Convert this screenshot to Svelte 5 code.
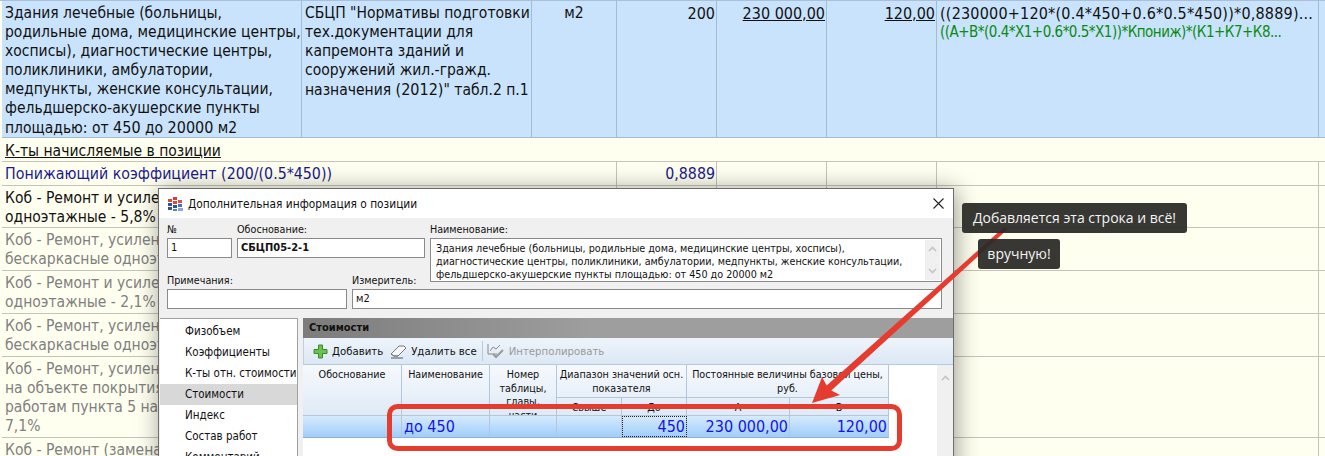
<script>
  const yellowRows = [
    { h: 42, cls: 'dark', lines: ['Коб - Ремонт и усиление конструкций', 'одноэтажные - 5,8%'] },
    { h: 43, cls: 'grey', lines: ['Коб - Ремонт, усиление конструкций', 'бескаркасные одноэтажные'] },
    { h: 43, cls: 'grey', lines: ['Коб - Ремонт и усиление конструкций', 'одноэтажные - 2,1%'] },
    { h: 43, cls: 'grey', lines: ['Коб - Ремонт, усиление конструкций', 'бескаркасные одноэтажные'] },
    { h: 81, cls: 'grey', lines: ['Коб - Ремонт, усиление конструкций', 'на объекте покрытия', 'работам пункта 5 настоящего', '7,1%'] },
    { h: 43, cls: 'grey', lines: ['Коб - Ремонт (замена конструкций)'] }
  ];
  const nav = ['Физобъем', 'Коэффициенты', 'К-ты отн. стоимости', 'Стоимости', 'Индекс', 'Состав работ', 'Комментарий'];
</script>

<div class="page">
  <div class="sheet">
    <div class="row blue">
      <div class="cell c1 lines">Здания лечебные (больницы,<br>родильные дома, медицинские центры,<br>хосписы), диагностические центры,<br>поликлиники, амбулатории,<br>медпункты, женские консультации,<br>фельдшерско-акушерские пункты<br>площадью: от <span class="num">450</span> до <span class="num">20000</span> м2</div>
      <div class="cell c2 lines">СБЦП "Нормативы подготовки<br>тех.документации для<br>капремонта зданий и<br>сооружений жил.-гражд.<br>назначения <span class="num">(2012)</span>" табл.2 п.1</div>
      <div class="cell c3 txt">м2</div>
      <div class="cell c4">200</div>
      <div class="cell c5"><u>230 000,00</u></div>
      <div class="cell c6"><u>120,00</u></div>
      <div class="cell c7">
        <div class="formula">((230000+120*(0.4*450+0.6*0.5*450))*0,8889)...</div>
        <div class="green">((А+В*(0.4*Х1+0.6*0.5*Х1))*Кпониж)*(К1+К7+К8...</div>
      </div>
      <div class="cell c8"></div>
    </div>
    <div class="row section txt"><u>К-ты начисляемые в позиции</u></div>
    <div class="row yellow h24">
      <div class="cell c13 navy">Понижающий коэффициент (200/(0.5*450))</div>
      <div class="cell c4 navy">0,8889</div>
      <div class="cell c5"></div>
      <div class="cell c6"></div>
      <div class="cell c7"></div>
      <div class="cell c8"></div>
    </div>
    {#each yellowRows as r}
      <div class="row yellow" style="height:{r.h}px">
        <div class="cell c13 {r.cls}">{#each r.lines as l}<div>{l}</div>{/each}</div>
        <div class="cell c4"></div>
        <div class="cell c5"></div>
        <div class="cell c6"></div>
        <div class="cell c7"></div>
        <div class="cell c8"></div>
      </div>
    {/each}
  </div>

  <div class="dialog">
    <div class="titlebar">
      <svg class="appicon" width="17" height="16" viewBox="0 0 17 16">
        <rect x="1" y="3" width="4" height="3" fill="#e0483c"/>
        <rect x="6" y="1" width="4" height="3" fill="#d83c32"/>
        <rect x="6" y="5" width="4" height="3" fill="#e0483c"/>
        <rect x="11" y="4" width="4" height="3" fill="#d85048"/>
        <rect x="1" y="7" width="4" height="3" fill="#30509c"/>
        <rect x="6" y="9" width="4" height="3" fill="#30509c"/>
        <rect x="11" y="8" width="4" height="3" fill="#4a70b8"/>
        <rect x="1" y="11" width="4" height="3" fill="#30509c"/>
        <rect x="6" y="13" width="4" height="2" fill="#5a80c4"/>
        <rect x="11" y="12" width="5" height="3" fill="#88a8d8"/>
      </svg>
      <span class="title">Дополнительная информация о позиции</span>
      <svg class="close" width="11" height="11" viewBox="0 0 11 11"><path d="M.5.5l10 10M10.500.5l-10 10" stroke="#222" stroke-width="1.100" fill="none"/></svg>
    </div>

    <div class="form">
      <label class="lbl l-num">№</label>
      <div class="input i-num">1</div>
      <label class="lbl l-base">Обоснование:</label>
      <div class="input i-base bold">СБЦП05-2-1</div>
      <label class="lbl l-name">Наименование:</label>
      <div class="input memo">
        <div class="memotext">Здания лечебные (больницы, родильные дома, медицинские центры, хосписы),<br>диагностические центры, поликлиники, амбулатории, медпункты, женские консультации,<br>фельдшерско-акушерские пункты площадью: от 450 до 20000 м2</div>
        <div class="memoscroll">
          <svg width="9" height="6" viewBox="0 0 9 6"><path d="M1 5l3.500-3.500L8 5" stroke="#c4c4c4" stroke-width="1.600" fill="none"/></svg>
          <svg width="9" height="6" viewBox="0 0 9 6"><path d="M1 1l3.500 3.500L8 1" stroke="#c4c4c4" stroke-width="1.600" fill="none"/></svg>
        </div>
      </div>
      <label class="lbl l-note">Примечания:</label>
      <div class="input i-note"></div>
      <label class="lbl l-unit">Измеритель:</label>
      <div class="input i-unit">м2</div>
    </div>

    <div class="main">
      <div class="nav">
        {#each nav as item}
          <div class="navitem" class:sel={item === 'Стоимости'}>{item}</div>
        {/each}
      </div>
      <div class="pane">
        <div class="panehead">Стоимости</div>
        <div class="toolbar">
          <svg class="ti" width="15" height="15" viewBox="0 0 15 15"><path d="M5.500 1h4v4.500h4.500v4h-4.500v4.500h-4v-4.500h-4.500v-4h4.500z" fill="#6cc24a" stroke="#3d8a2a"/></svg>
          <span class="tt">Добавить</span>
          <svg class="ti er" width="17" height="15" viewBox="0 0 17 15"><path d="M1 10l8-8h5l2 2-8 8H4z" fill="#f4f6f8" stroke="#777"/><path d="M1 10l3 2h4" fill="none" stroke="#777"/><path d="M1 14h12" stroke="#555"/></svg>
          <span class="tt">Удалить все</span>
          <span class="tsep"></span>
          <svg class="ti" width="18" height="17" viewBox="0 0 18 17"><path d="M1 1v10h9M3 8l3-4 3 2 4-4" fill="none" stroke="#8a8a8a"/><path d="M6 11l3 3 7-7" fill="none" stroke="#9a9a9a" stroke-width="2"/></svg>
          <span class="tt off">Интерполировать</span>
        </div>
        <div class="tablearea">
          <div class="table">
            <div class="thead">
              <div class="th a1">Обоснование</div>
              <div class="th a2">Наименование</div>
              <div class="th a3">Номер таблицы, главы, части</div>
              <div class="th a4">Диапазон значений осн. показателя</div>
              <div class="th a5">Постоянные величины базовой цены, руб.</div>
              <div class="th sub s1">Свыше</div>
              <div class="th sub s2">До</div>
              <div class="th sub s3">А</div>
              <div class="th sub s4">В</div>
            </div>
            <div class="tbody">
              <div class="td"></div>
              <div class="td left">до 450</div>
              <div class="td"></div>
              <div class="td"></div>
              <div class="td focus">450</div>
              <div class="td">230 000,00</div>
              <div class="td">120,00</div>
            </div>
          </div>
          <div class="vscroll">
            <svg width="9" height="6" viewBox="0 0 9 6"><path d="M1 5l3.500-3.500L8 5" stroke="#c4c4c4" stroke-width="1.600" fill="none"/></svg>
          </div>
        </div>
      </div>
    </div>
  </div>

  <svg class="overlay" width="1325" height="456" viewBox="0 0 1325 456">
    <path d="M1007.300 229.500 831.300 390.600 840 395 812 403 822 377 826.700 385.400 1004.700 226.500z" fill="#e53c30"/>
    <rect x="389.500" y="406.500" width="510" height="42" rx="8" fill="none" stroke="#e53c30" stroke-width="5"/>
  </svg>

  <div class="tip t1">Добавляется эта строка и всё!</div>
  <div class="tip t2">вручную!</div>
</div>

<style>
  :global(body) { margin: 0; background: #fffff0; }
  .page {
    position: relative;
    width: 1325px;
    height: 456px;
    overflow: hidden;
    font-family: "DejaVu Sans", sans-serif;
    font-stretch: condensed;
    color: #111;
  }
  .sheet { display: flex; flex-direction: column; padding-left: 2px; border-top: 1px solid #a9c0d8; }
  .row { display: flex; box-sizing: border-box; font-size: 16px; line-height: 19px; flex: none; }
  .txt { font-size: 15.500px; }
  .lines { font-size: 15.500px; white-space: nowrap; }
  .num { font-size: 16px; }
  .blue { height: 137px; background: #c9e3fc; border-bottom: 1px solid #a3bcd6; }
  .section { height: 24px; background: #fffff0; border-bottom: 1px solid #c4c4bc; padding: 4px 3px 0; }
  .yellow { background: #fffff0; border-bottom: 1px solid #c4c4bc; }
  .h24 { height: 24px; }
  .h24 .cell { padding-top: 2px; }
  .cell { box-sizing: border-box; padding: 3px 3px 0; border-right: 1px solid #a3bcd6; overflow: hidden; flex: none; }
  .yellow .cell { border-right-color: #c4c4bc; }
  .c1 { width: 300px; }
  .c2 { width: 230px; }
  .c3 { width: 85px; text-align: center; }
  .c4 { width: 100px; text-align: right; padding-right: 1px; }
  .c5 { width: 110px; text-align: right; padding-right: 1px; }
  .c6 { width: 110px; text-align: right; padding-right: 1px; }
  .c7 { width: 382px; white-space: nowrap; }
  .c8 { width: 6px; border-right: 0; }
  .c13 { width: 615px; white-space: nowrap; font-size: 15.500px; }
  .formula { letter-spacing: .2px; }
  .green { color: #0a8a10; font-size: 15px; letter-spacing: -.5px; }
  .navy { color: #1a1a8c; font-size: 15.800px; }
  .dark { color: #111; }
  .grey { color: #808080; }

  .dialog {
    position: absolute;
    left: 158px;
    top: 188px;
    width: 796px;
    height: 290px;
    box-sizing: border-box;
    border: 1px solid #6e6e6e;
    background: #f0f0f0;
    box-shadow: 2px 2px 22px rgba(0, 0, 0, .4);
    font-size: 10.700px;
    color: #111;
    display: flex;
    flex-direction: column;
  }
  .titlebar { height: 29px; flex: none; background: #fff; display: flex; align-items: center; padding: 0 9px 0 8px; gap: 4px; }
  .title { font-size: 11.800px; flex: 1; }
  .close { flex: none; margin-right: 0; }

  .form {
    display: grid;
    grid-template-columns: 65px 110px 73px 512px;
    grid-template-rows: 16px 20px 15px 16px 20px;
    column-gap: 5px;
    padding: 4px 0 9px 8px;
    flex: none;
  }
  .lbl { line-height: 15px; }
  .input {
    box-sizing: border-box;
    background: #fff;
    border: 1px solid #8a8a8a;
    padding: 0 3px;
    line-height: 18px;
    font-size: 11px;
    overflow: hidden;
  }
  .bold { font-weight: 700; }
  .l-num { grid-area: 1 / 1; }
  .i-num { grid-area: 2 / 1; }
  .l-base { grid-area: 1 / 2 / auto / span 2; }
  .i-base { grid-area: 2 / 2 / auto / span 2; }
  .l-name { grid-area: 1 / 4; }
  .memo { grid-area: 2 / 4 / span 3 / auto; height: 44px; display: flex; padding: 0; }
  .memotext { flex: 1; padding: 3px 5px; font-size: 10.700px; line-height: 13px; white-space: nowrap; }
  .memoscroll { width: 15px; margin: 1px; flex: none; background: #f0f0f0; display: flex; flex-direction: column; justify-content: space-between; align-items: center; padding: 6px 0; box-sizing: border-box; }
  .l-note { grid-area: 4 / 1 / auto / span 2; }
  .i-note { grid-area: 5 / 1 / auto / span 2; }
  .l-unit { grid-area: 4 / 3; }
  .i-unit { grid-area: 5 / 3 / auto / span 2; }

  .main { display: flex; flex: 1; min-height: 0; padding-left: 1px; gap: 5px; }
  .nav { width: 138px; flex: none; box-sizing: border-box; background: #fff; border: 1px solid #a0a0a0; border-left: 0; padding-top: 2px; }
  .navitem { height: 21px; line-height: 21px; padding-left: 25px; white-space: nowrap; font-size: 11.500px; }
  .navitem.sel { background: #d8d8d8; }
  .pane { flex: 1; display: flex; flex-direction: column; min-width: 0; }
  .panehead {
    height: 20px; flex: none; box-sizing: border-box; padding-left: 6px;
    line-height: 20px; font-weight: 700; font-size: 11px; color: #111;
    background: linear-gradient(90deg, #7c7c7c, #9e9e9e 45%, #9e9e9e);
  }
  .toolbar {
    height: 27px; flex: none; box-sizing: border-box; display: flex; align-items: center; padding-left: 9px;
    background: linear-gradient(#eef4fb, #dce8f5);
    border-bottom: 1px solid #b6cadf;
    border-left: 1px solid #c0d0e0;
  }
  .ti { flex: none; }
  .tt { margin-left: 4px; font-size: 11.300px; white-space: nowrap; }
  .off { color: #9a9a9a; }
  .er { margin-left: 7px; }
  .tsep { width: 1px; height: 20px; background: #b6cadf; margin: 0 4px 0 5px; }
  .tablearea { flex: 1; display: flex; background: #fff; min-height: 0; }
  .table { width: 586px; flex: none; }
  .thead {
    height: 50px; overflow: hidden; display: grid;
    grid-template-columns: 99px 88px 67px 65px 65px 103px 99px;
    grid-template-rows: 33px 17px;
    background: linear-gradient(#f6f9fd, #dfeaf6);
  }
  .th {
    box-sizing: border-box; border-right: 1px solid #b4c6da; text-align: center;
    padding: 3px 0 0; line-height: 13.500px; font-size: 10.700px; overflow: hidden;
  }
  .a1 { grid-area: 1 / 1 / span 2 / auto; }
  .a2 { grid-area: 1 / 2 / span 2 / auto; }
  .a3 { grid-area: 1 / 3 / span 2 / auto; padding-left: 2px; padding-right: 2px; }
  .a4 { grid-area: 1 / 4 / auto / span 2; border-bottom: 1px solid #b4c6da; }
  .a5 { grid-area: 1 / 6 / auto / span 2; border-bottom: 1px solid #b4c6da; padding-left: 2px; padding-right: 2px; }
  .sub { padding-top: 3px; }
  .s1 { grid-area: 2 / 4; }
  .s2 { grid-area: 2 / 5; }
  .s3 { grid-area: 2 / 6; }
  .s4 { grid-area: 2 / 7; }
  .tbody {
    height: 23px; box-sizing: border-box; display: grid;
    grid-template-columns: 99px 88px 67px 65px 65px 103px 99px;
    background: linear-gradient(#d6eafd, #9fcdfa);
    border-top: 1px solid #b4c6da;
    border-bottom: 1px solid #8fb0d0;
  }
  .td {
    box-sizing: border-box; border-right: 1px solid #b4c6da; color: #1414e6;
    font-size: 16px; line-height: 21px; text-align: right; padding: 0 1px; white-space: nowrap; overflow: hidden;
  }
  .left { text-align: left; padding-left: 2px; }
  .focus { outline: 1px dotted #222; outline-offset: -1px; }
  .vscroll { margin-left: 48px; width: 16px; flex: none; background: #f0f0f0; text-align: center; padding-top: 6px; box-sizing: border-box; }

  .overlay { position: absolute; left: 0; top: 0; pointer-events: none; }
  .tip {
    position: absolute;
    box-sizing: border-box;
    height: 30px;
    line-height: 30px;
    background: rgba(44, 44, 40, .95);
    color: #f4f4f4;
    border-radius: 3px;
    font-family: "Open Sans", sans-serif;
    font-stretch: normal;
    font-size: 14px;
    text-align: center;
    white-space: nowrap;
  }
  .t1 { left: 962px; top: 203px; width: 225px; }
  .t2 { left: 978px; top: 239px; width: 82px; }
</style>
